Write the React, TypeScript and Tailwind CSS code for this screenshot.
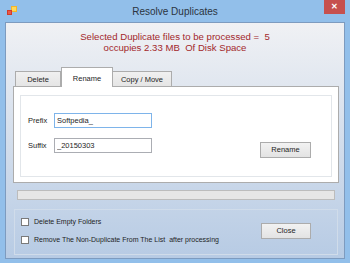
import { useState } from "react";

const AppIcon = () => (
  <svg width="10" height="10" viewBox="0 0 10 10">
    <rect x="4" y="0" width="6" height="6" fill="#f2b52c" />
    <rect x="5" y="1" width="4" height="4" fill="#ffd95a" />
    <rect x="0" y="4" width="5" height="5" fill="#d23b2b" />
    <rect x="1" y="5" width="3" height="3" fill="#e9584a" />
  </svg>
);

const CheckBox = ({ label }: { label: string }) => {
  const [checked, setChecked] = useState(false);
  return (
    <label className="flex items-center gap-[5px] cursor-default">
      <span
        onClick={() => setChecked(!checked)}
        className="w-[8px] h-[8px] border border-[#7a7a7a] bg-white flex items-center justify-center text-[7px] leading-none"
      >
        {checked ? "✓" : ""}
      </span>
      <span className="whitespace-pre">{label}</span>
    </label>
  );
};

const WinButton = ({ text, className }: { text: string; className?: string }) => (
  <button
    className={
      "border border-[#acacac] bg-gradient-to-b from-[#f2f2f2] to-[#e3e3e3] text-[7.5px] text-[#1e1e1e] leading-none flex items-center justify-center " +
      (className ?? "")
    }
  >
    {text}
  </button>
);

const App = () => {
  const [tab, setTab] = useState("Rename");
  const [prefix, setPrefix] = useState("Softpedia_");
  const [suffix, setSuffix] = useState("_20150303");
  const tabs = ["Delete", "Rename", "Copy / Move"];
  const tabWidths: Record<string, string> = {
    Delete: "w-[46px]",
    Rename: "w-[52px]",
    "Copy / Move": "w-[60px]",
  };

  return (
    <div
      className="w-[350px] h-[263px] bg-[#92bfea] flex flex-col overflow-hidden"
      style={{ fontFamily: '"Liberation Sans", Arial, sans-serif' }}
    >
      {/* title bar */}
      <div className="h-[22px] relative flex items-center justify-center shrink-0">
        <div className="absolute left-[7px] top-[6px]">
          <AppIcon />
        </div>
        <span className="text-[10px] text-[#2b3440] pt-[1px]">Resolve Duplicates</span>
        <div className="absolute left-[324px] top-0 w-[21px] h-[14px] bg-[#c6504e] flex items-center justify-center text-white text-[8px] font-bold leading-none">
          ✕
        </div>
      </div>

      {/* client area */}
      <div className="mx-[5px] mb-[4px] flex-1 border border-[#7d9bbf] bg-gradient-to-b from-[#f0f1f4] to-[#b7cbe4] flex flex-col">
        <div className="pt-[8px] text-center text-[9.6px] leading-[11px] text-[#a3282b] whitespace-pre">
          <div>Selected Duplicate files to be processed =  5</div>
          <div>occupies 2.33 MB  Of Disk Space</div>
        </div>

        {/* tab control */}
        <div className="mt-[14px] ml-[7px] mr-[5px]">
          <div className="h-[19px] flex items-end pl-[2px] relative z-10">
            {tabs.map((t) =>
              t === tab ? (
                <div
                  key={t}
                  className={
                    tabWidths[t] +
                    " h-[20px] -mb-[1px] bg-white border border-b-0 border-[#acacac] text-[7.5px] text-[#1e1e1e] flex items-start justify-center pt-[5px]"
                  }
                >
                  {t}
                </div>
              ) : (
                <div
                  key={t}
                  onClick={() => setTab(t)}
                  className={
                    tabWidths[t] +
                    " h-[15px] bg-gradient-to-b from-[#f0f0f0] to-[#e5e5e5] border border-b-0 border-[#acacac] -ml-[1px] first:ml-0 text-[7.5px] text-[#1e1e1e] flex items-center justify-center pt-[1px]"
                  }
                >
                  {t}
                </div>
              )
            )}
          </div>
          <div className="h-[97px] bg-white border border-[#acacac] pt-[8px] px-[6px] pb-[5px] flex">
            <div className="flex-1 border border-[#e2e6ea] pt-[17px] pl-[7px] pr-[20px] flex items-start text-[7.5px] text-[#1e1e1e]">
              <div className="flex flex-col gap-[10px]">
                <div className="flex items-center">
                  <span className="w-[26px]">Prefix</span>
                  <input
                    value={prefix}
                    onChange={(e) => setPrefix(e.target.value)}
                    className="w-[98px] h-[15px] border border-[#7eb4ea] px-[2px] text-[7.5px] outline-none"
                  />
                </div>
                <div className="flex items-center">
                  <span className="w-[26px]">Suffix</span>
                  <input
                    value={suffix}
                    onChange={(e) => setSuffix(e.target.value)}
                    className="w-[98px] h-[15px] border border-[#abadb3] px-[2px] text-[7.5px] outline-none"
                  />
                </div>
              </div>
              <WinButton text="Rename" className="ml-auto mt-[29px] w-[51px] h-[16px]" />
            </div>
          </div>
        </div>

        {/* progress bar */}
        <div className="mt-[7px] ml-[11px] mr-[9px] h-[10px] bg-[#e6e6e6] border border-[#bcbcbc]" />

        {/* options */}
        <div className="mt-[9px] ml-[8px] mr-[6px] h-[46px] border border-[#d0dcea] flex pl-[6px] pr-[26px] pt-[7px] text-[7px] text-[#1e1e1e]">
          <div className="flex flex-col gap-[7px]">
            <CheckBox label="Delete Empty Folders" />
            <CheckBox label="Remove The Non-Duplicate From The List  after processing" />
          </div>
          <WinButton text="Close" className="ml-auto mt-[6px] w-[50px] h-[16px]" />
        </div>
      </div>
    </div>
  );
};

export default App;
